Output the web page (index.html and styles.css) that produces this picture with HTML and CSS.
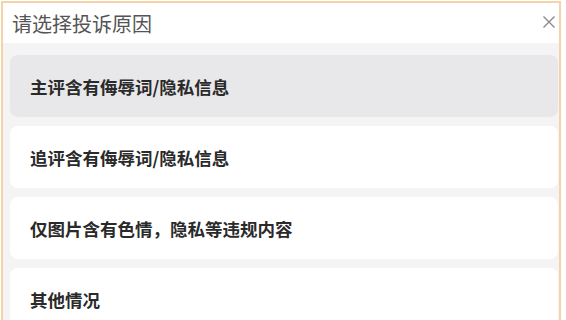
FILE: index.html
```html
<html>
<head>
<meta charset="UTF-8">
<meta name="viewport" content="width=device-width, initial-scale=1.0">
<title>投诉原因</title>
<link rel="stylesheet" href="styles.css">
</head>
<body>
    <div class="dialog">
        <div class="dialog-header">
            <span class="dialog-title">请选择投诉原因</span>
            <svg class="close-icon" viewBox="0 0 14 14" xmlns="http://www.w3.org/2000/svg">
                <path d="M1.5 1.5L12.5 12.5M12.5 1.5L1.5 12.5" stroke="#8a8a8a" stroke-width="1.4" fill="none"/>
            </svg>
        </div>
        <div class="reason-list">
            <div class="reason active">主评含有侮辱词/隐私信息</div>
            <div class="reason">追评含有侮辱词/隐私信息</div>
            <div class="reason">仅图片含有色情，隐私等违规内容</div>
            <div class="reason">其他情况</div>
        </div>
    </div>
</body>
</html>
```

FILE: styles.css
```css
body {
    margin: 0;
    background-color: #ffffff;
    font-family: "Noto Sans CJK SC", "Noto Sans", sans-serif;
    overflow: hidden;
}
.dialog {
    margin: 1px 0 0 1px;
    width: 556px;
    height: 330px;
    border: 2px solid #f6d2a8;
    border-bottom: none;
    background-color: #f4f4f5;
}
.dialog-header {
    height: 40px;
    display: flex;
    align-items: center;
    justify-content: space-between;
    padding: 0 3px 0 9px;
    background-color: #ffffff;
}
.dialog-title {
    font-size: 20px;
    color: #555555;
}
.close-icon {
    width: 14px;
    height: 14px;
    margin-top: -2px;
}
.reason-list {
    display: flex;
    flex-direction: column;
    gap: 9px;
    padding: 12px 1px 0 7px;
}
.reason {
    height: 62px;
    display: flex;
    align-items: center;
    padding-left: 20px;
    background-color: #ffffff;
    border-radius: 8px;
    font-size: 17.5px;
    font-weight: bold;
    color: #2a2a2a;
}
.reason.active {
    background-color: #e8e7e9;
}
```
